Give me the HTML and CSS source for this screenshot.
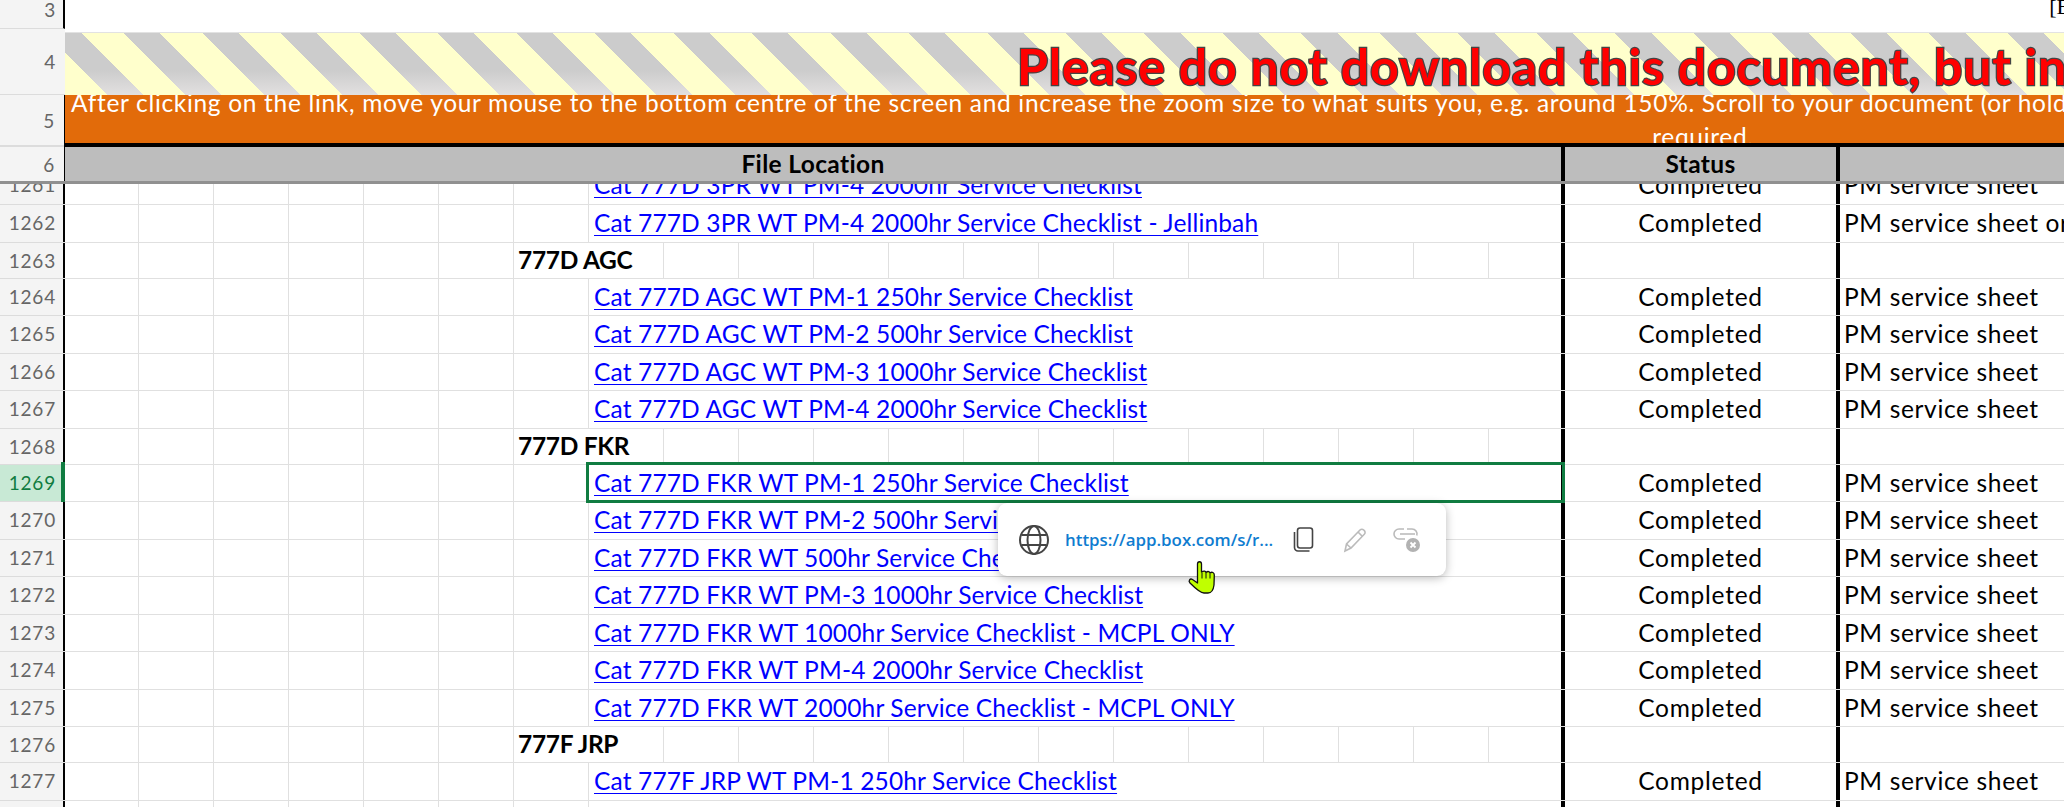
FILE: index.html
```html
<!DOCTYPE html>
<html lang="en">
<head>
<meta charset="utf-8">
<title>Service Checklists</title>
<link rel="stylesheet" href="styles.css">
</head>
<body>
<div class="sheet">
  <div class="frozen">
    <div class="frow r3"><div class="hd">3</div><div class="r3-body"><span class="r3-text">[E</span></div></div>
    <div class="frow r4"><div class="hd">4</div><div class="banner"><span class="banner-text">Please do not download this document, but instead view it online</span></div></div>
    <div class="frow r5"><div class="hd">5</div><div class="notice">
      <div class="notice-line">After clicking on the link, move your mouse to the bottom centre of the screen and increase the zoom size to what suits you, e.g. around 150%. Scroll to your document (or hold down the mouse wheel) as</div>
      <div class="notice-end">required.</div>
    </div></div>
    <div class="frow r6"><div class="hd">6</div><div class="th th-loc">File Location</div><div class="th th-status">Status</div><div class="th th-note"></div></div>
  </div>
  <div class="rows">
    <div class="row h38"><div class="hd">1261</div><div class="blank"></div><div class="link"><a href="#">Cat 777D 3PR WT PM-4 2000hr Service Checklist</a></div><div class="status">Completed</div><div class="note">PM service sheet</div></div>
    <div class="row h38"><div class="hd">1262</div><div class="blank"></div><div class="link"><a href="#">Cat 777D 3PR WT PM-4 2000hr Service Checklist - Jellinbah</a></div><div class="status">Completed</div><div class="note">PM service sheet or checklist</div></div>
    <div class="row h36"><div class="hd">1263</div><div class="blank-g"></div><div class="group">777D AGC</div><div class="lines"></div><div class="status"></div><div class="note"></div></div>
    <div class="row h37"><div class="hd">1264</div><div class="blank"></div><div class="link"><a href="#">Cat 777D AGC WT PM-1 250hr Service Checklist</a></div><div class="status">Completed</div><div class="note">PM service sheet</div></div>
    <div class="row h38"><div class="hd">1265</div><div class="blank"></div><div class="link"><a href="#">Cat 777D AGC WT PM-2 500hr Service Checklist</a></div><div class="status">Completed</div><div class="note">PM service sheet</div></div>
    <div class="row h37"><div class="hd">1266</div><div class="blank"></div><div class="link"><a href="#">Cat 777D AGC WT PM-3 1000hr Service Checklist</a></div><div class="status">Completed</div><div class="note">PM service sheet</div></div>
    <div class="row h38"><div class="hd">1267</div><div class="blank"></div><div class="link"><a href="#">Cat 777D AGC WT PM-4 2000hr Service Checklist</a></div><div class="status">Completed</div><div class="note">PM service sheet</div></div>
    <div class="row h36"><div class="hd">1268</div><div class="blank-g"></div><div class="group">777D FKR</div><div class="lines"></div><div class="status"></div><div class="note"></div></div>
    <div class="row h37 selected"><div class="hd">1269</div><div class="blank"></div><div class="link"><a href="#">Cat 777D FKR WT PM-1 250hr Service Checklist</a><span class="cellbox"></span></div><div class="status">Completed</div><div class="note">PM service sheet</div></div>
    <div class="row h38"><div class="hd">1270</div><div class="blank"></div><div class="link"><a href="#">Cat 777D FKR WT PM-2 500hr Service Checklist</a></div><div class="status">Completed</div><div class="note">PM service sheet</div></div>
    <div class="row h37"><div class="hd">1271</div><div class="blank"></div><div class="link"><a href="#">Cat 777D FKR WT 500hr Service Checklist - MCPL ONLY</a></div><div class="status">Completed</div><div class="note">PM service sheet</div></div>
    <div class="row h38"><div class="hd">1272</div><div class="blank"></div><div class="link"><a href="#">Cat 777D FKR WT PM-3 1000hr Service Checklist</a></div><div class="status">Completed</div><div class="note">PM service sheet</div></div>
    <div class="row h37"><div class="hd">1273</div><div class="blank"></div><div class="link"><a href="#">Cat 777D FKR WT 1000hr Service Checklist - MCPL ONLY</a></div><div class="status">Completed</div><div class="note">PM service sheet</div></div>
    <div class="row h38"><div class="hd">1274</div><div class="blank"></div><div class="link"><a href="#">Cat 777D FKR WT PM-4 2000hr Service Checklist</a></div><div class="status">Completed</div><div class="note">PM service sheet</div></div>
    <div class="row h37"><div class="hd">1275</div><div class="blank"></div><div class="link"><a href="#">Cat 777D FKR WT 2000hr Service Checklist - MCPL ONLY</a></div><div class="status">Completed</div><div class="note">PM service sheet</div></div>
    <div class="row h36"><div class="hd">1276</div><div class="blank-g"></div><div class="group">777F JRP</div><div class="lines"></div><div class="status"></div><div class="note"></div></div>
    <div class="row h38"><div class="hd">1277</div><div class="blank"></div><div class="link"><a href="#">Cat 777F JRP WT PM-1 250hr Service Checklist</a></div><div class="status">Completed</div><div class="note">PM service sheet</div></div>
    <div class="row h37"><div class="hd"></div><div class="blank"></div><div class="link"></div><div class="status"></div><div class="note"></div></div>
  </div>

  <div class="popup">
    <svg class="ic-globe" viewBox="0 0 32 32" width="32" height="32" fill="none" stroke="#444" stroke-width="2"><circle cx="16" cy="16" r="14"/><ellipse cx="16" cy="16" rx="6.5" ry="14"/><path d="M3.5 11h25M3.5 21h25"/></svg>
    <span class="popup-url">https://app.box.com/s/r...</span>
    <svg class="ic-copy" viewBox="0 0 22 26" width="22" height="26" fill="none" stroke="#444" stroke-width="1.6"><rect x="4.5" y="1" width="15" height="20" rx="2.5"/><path d="M1.5 5v15.5A3.5 3.5 0 0 0 5 24h11.5"/></svg>
    <svg class="ic-pencil" viewBox="0 0 24 26" width="24" height="26" fill="none" stroke="#bbb" stroke-width="1.6"><path d="M2 24l1.5-7L17 3a2.6 2.6 0 0 1 3.7 0l.6.6a2.6 2.6 0 0 1 0 3.7L8 21z"/><path d="M3.5 17L8 21M15 5l4.5 4.5"/></svg>
    <svg class="ic-unlink" viewBox="0 0 28 26" width="28" height="26" fill="none"><path d="M11 2H6a5 5 0 0 0 0 10h6M14 2h5a5 5 0 0 1 4.8 6.500" stroke="#bbb" stroke-width="1.6"/><path d="M7 7h15" stroke="#bbb" stroke-width="1.6"/><circle cx="20" cy="18" r="7" fill="#b2b2b2"/><path d="M17.500 15.500l5 5M22.500 15.500l-5 5" stroke="#fff" stroke-width="1.800"/></svg>
  </div>
  <svg class="hand" viewBox="0 0 60 50" width="60" height="50"><path d="M17.500 14C17.500 11 21.500 11 21.500 14L21.500 22C24 20.500 25.500 21 26 22.500C28 20.800 29.500 21.500 30 23C32 21.500 34.300 22.500 34.300 25L34 35C33.500 39 32 43 28 43L24 43C20 43 15 38 10 33C8 31 10 28 12.500 29.500L17.500 33Z" fill="#c0ff00" stroke="#111" stroke-width="1.300" stroke-linejoin="round"/><path d="M22 22.500v6M26 23v5.500M30 23.500v5" stroke="#111" stroke-width="1" fill="none"/></svg>
</div>
</body>
</html>
```
FILE: styles.css
```css
* { box-sizing: border-box; }
html, body { margin: 0; padding: 0; background: #fff; }
.sheet {
  position: relative;
  width: 2064px;
  height: 807px;
  overflow: hidden;
  display: flex;
  flex-direction: column;
  font-family: "Lato", "Liberation Sans", sans-serif;
  font-size: 24.5px;
  color: #000;
}
.frozen { display: flex; flex-direction: column; flex: none; position: relative; z-index: 2; background: #fff; }
.frow { display: flex; flex: none; }
.hd {
  flex: none;
  width: 65px;
  border-right: 2px solid #000;
  background: #f4f4f4;
  color: #666;
  font-size: 19px;
  letter-spacing: .8px;
  text-align: right;
  padding-right: 7px;
  position: relative;
}
.r3 { height: 29px; }
.r3 .hd { border-bottom: 1px solid #dcdcdc; line-height: 20px; }
.r3-body { flex: 1; overflow: hidden; text-align: right; }
.r3-text { display: block; font-family: "Liberation Serif", serif; font-size: 22px; line-height: 14px; margin-right: -6px; }
.r4 { height: 66px; }
.r4 .hd { border-bottom: 1px solid #dcdcdc; border-right-width: 0; line-height: 66px; padding-right: 9px; }
.banner {
  flex: 1;
  margin-top: 3px;
  overflow: hidden;
  white-space: nowrap;
  padding-left: 952px;
  border-top: 1px solid #e2e2e2;
  background:
    repeating-linear-gradient(45deg, #ffffcc 0 29.8px, transparent 29.8px 55.5px),
    linear-gradient(#cccccc 60%, #e2e0e0);
}
.banner-text {
  display: block;
  font-weight: 700;
  font-size: 50px;
  letter-spacing: .8px;
  line-height: 66px;
  color: #ff0000;
  -webkit-text-stroke: 2.4px #444;
  paint-order: stroke fill;
}
.r5 { height: 52px; }
.r5 .hd { line-height: 52px; padding-right: 9px; box-shadow: inset 0 -2px 0 #dcdcdc; border-right-width: 1px; }
.notice {
  flex: 1;
  background: #e26b0a;
  color: #fff;
  overflow: hidden;
  border-bottom: 4px solid #000;
  white-space: nowrap;
  letter-spacing: .68px;
}
.notice-line { padding-left: 6px; line-height: 33px; margin-top: -9px; }
.notice-end { width: 3276px; text-align: center; line-height: 33px; margin-top: 1px; }
.r6 { height: 37px; border-bottom: 3px solid #909090; }
.r6 .hd { line-height: 36px; padding-right: 9px; border-right-width: 1px; height: 34px; }
.th { background: #bdbdbd; font-weight: 700; text-align: center; line-height: 34px; height: 34px; letter-spacing: .35px; }
.th-loc { flex: none; width: 1496px; }
.th-status { flex: none; width: 275px; border-left: 4px solid #000; }
.th-note { flex: 1; border-left: 4px solid #000; }

.rows { flex: 1; overflow: hidden; }
.row { display: flex; margin: 0; border-bottom: 1px solid #e0e0e0; }
.row:first-child { margin-top: -17px; }
.h36 { height: 36px; }
.h37 { height: 37px; }
.h38 { height: 38px; }
.row > div { display: flex; align-items: center; white-space: nowrap; padding-bottom: 2px; }
.row .hd { display: block; line-height: 36px; padding-bottom: 0; }
.row .hd { box-shadow: 0 1px 0 #dcdcdc; }
.blank, .blank-g, .lines {
  flex: none;
  background-image: linear-gradient(90deg, transparent 73px, #e0e0e0 73px, #e0e0e0 74px, transparent 74px);
  background-size: 75px 100%;
}
.blank { width: 524px; }
.blank-g { width: 449px; }
.group { flex: none; width: 149px; padding-left: 4px; font-weight: 700; letter-spacing: -.3px; }
.lines {
  width: 898px;
  background-image: linear-gradient(90deg, #e0e0e0 1px, transparent 1px);
}
.link { flex: none; width: 972px; padding-left: 5px; position: relative; letter-spacing: .15px; }
.link a { color: #0000ff; text-decoration: underline; text-underline-offset: 3px; text-decoration-thickness: 1px; }
.status { flex: none; width: 275px; border-left: 4px solid #000; justify-content: center; letter-spacing: .75px; }
.note { flex: 1; border-left: 4px solid #000; padding-left: 4px; overflow: hidden; letter-spacing: .65px; }

.selected .hd { background: #c8e9d5; color: #107c41; }
.selected .hd::after {
  content: "";
  position: absolute;
  right: -2px;
  top: -3px;
  bottom: -2px;
  width: 4px;
  background: #107c41;
}
.cellbox {
  position: absolute;
  left: -3px;
  right: -4px;
  top: -3px;
  bottom: -2px;
  border: 3px solid #107c41;
}

.popup {
  position: absolute;
  left: 998px;
  top: 503px;
  width: 448px;
  height: 73px;
  background: #fff;
  border-radius: 9px;
  box-shadow: 0 2px 10px rgba(0, 0, 0, .28);
  display: flex;
  align-items: center;
  padding-left: 20px;
  z-index: 3;
}
.popup-url {
  font-family: "Open Sans", sans-serif;
  font-weight: 600;
  font-size: 16.900px;
  color: #0f7cd0;
  margin-left: 15px;
  width: 218px;
  white-space: nowrap;
}
.ic-copy { margin-left: 10px; }
.ic-pencil { margin-left: 28px; }
.ic-unlink { margin-left: 26px; }
.hand { position: absolute; left: 1180px; top: 550px; z-index: 4; }
```
